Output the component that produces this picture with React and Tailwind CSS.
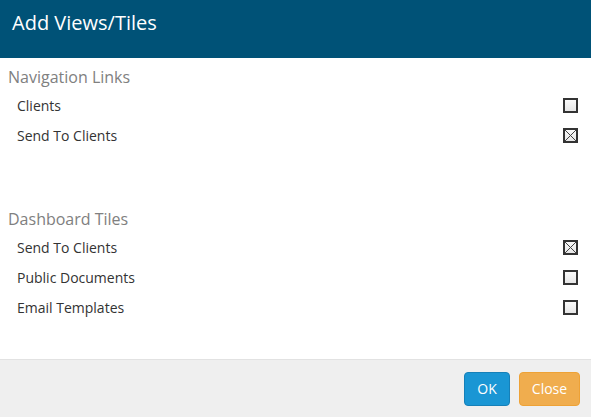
import React, { useState } from 'react';

const Box = ({ checked, onClick }) => (
  <div
    onClick={onClick}
    className="w-[15px] h-[15px] box-border border-2 border-[#333] bg-gradient-to-b from-[#fafafa] to-[#e6e6e6] flex items-center justify-center cursor-pointer"
  >
    {checked && (
      <svg width="11" height="11" viewBox="0 0 11 11">
        <path d="M0 0L11 11M11 0L0 11" stroke="#444" strokeWidth="1" />
      </svg>
    )}
  </div>
);

const Section = ({ title, items, state, toggle }) => (
  <div>
    <div className="text-[16px] text-[#808080] pl-2 h-[27px] flex items-center mt-[5px]">{title}</div>
    {items.map((it) => (
      <div key={it} className="h-[30px] flex items-center justify-between pl-[17px] pr-[13px] text-[14px] text-[#333]">
        <span>{it}</span>
        <Box checked={state[it]} onClick={() => toggle(it)} />
      </div>
    ))}
  </div>
);

export default function App() {
  const [nav, setNav] = useState({ Clients: false, 'Send To Clients': true });
  const [tiles, setTiles] = useState({ 'Send To Clients': true, 'Public Documents': false, 'Email Templates': false });

  return (
    <div className="w-[591px] h-[417px] flex flex-col bg-white" style={{ fontFamily: '"Open Sans", sans-serif' }}>
      <div className="h-[58px] bg-[#005277] text-white text-[20px] pl-3 pt-[8px] shrink-0">Add Views/Tiles</div>
      <div className="flex-1 flex flex-col gap-[50px]">
        <Section title="Navigation Links" items={['Clients', 'Send To Clients']} state={nav} toggle={(k) => setNav((p) => ({ ...p, [k]: !p[k] }))} />
        <Section title="Dashboard Tiles" items={['Send To Clients', 'Public Documents', 'Email Templates']} state={tiles} toggle={(k) => setTiles((p) => ({ ...p, [k]: !p[k] }))} />
      </div>
      <div className="h-[58px] bg-[#efefef] border-t border-[#e2e2e2] flex items-center justify-end gap-[9px] pr-[11px] shrink-0">
        <button className="h-[34px] w-[46px] rounded-[4px] bg-[#1a96d4] border border-[#1680b8] text-white text-[14px]">OK</button>
        <button className="h-[34px] w-[61px] rounded-[4px] bg-[#f0ad4e] border border-[#eea236] text-white text-[14px]">Close</button>
      </div>
    </div>
  );
}
